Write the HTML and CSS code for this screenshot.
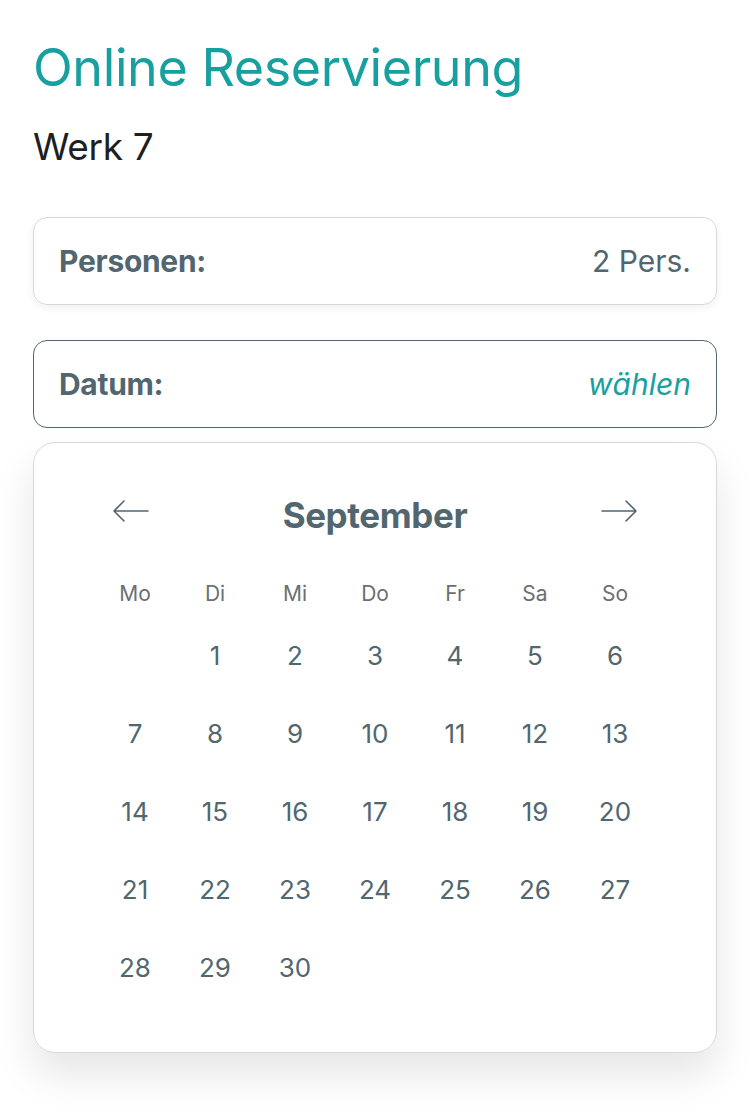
FILE: index.html
```html
<!DOCTYPE html>
<html lang="de">
  <head>
    <meta charset="UTF-8" />
    <meta name="viewport" content="width=device-width, initial-scale=1.0" />
    <title>Online Reservierung</title>
    <link rel="stylesheet" href="styles.css">
  </head>
  <body>
    <main id="container">
      <h1>Online Reservierung</h1>
      <h2>Werk 7</h2>

      <div class="field">
        <span class="label">Personen:</span>
        <span class="value">2 Pers.</span>
      </div>

      <div class="field active">
        <span class="label">Datum:</span>
        <span class="value pick">wählen</span>
      </div>

      <section class="calendar">
        <div class="cal-head">
          <button class="arrow" aria-label="zurück">
            <svg width="38" height="24" viewBox="0 0 38 24" fill="none" stroke="#52666f" stroke-width="1.6" stroke-linecap="round" stroke-linejoin="round">
              <path d="M36 12H2M12 2L2 12l10 10" />
            </svg>
          </button>
          <span class="month">September</span>
          <button class="arrow" aria-label="weiter">
            <svg width="38" height="24" viewBox="0 0 38 24" fill="none" stroke="#52666f" stroke-width="1.6" stroke-linecap="round" stroke-linejoin="round">
              <path d="M2 12h34M26 2l10 10-10 10" />
            </svg>
          </button>
        </div>
        <div class="weekdays">
          <span>Mo</span><span>Di</span><span>Mi</span><span>Do</span><span>Fr</span><span>Sa</span><span>So</span>
        </div>
        <div class="days" id="days"></div>
      </section>
    </main>
    <script>
        let days = document.getElementById('days');
        let offset = 1;
        for (let i = 0; i < offset; i++) {
            days.appendChild(document.createElement('span'));
        }
        for (let d = 1; d <= 30; d++) {
            let el = document.createElement('span');
            el.textContent = d;
            days.appendChild(el);
        }
    </script>
  </body>
</html>
```

FILE: styles.css
```css
html {
    font-family: Inter, "Noto Sans", sans-serif;
    color: #52666f;
}

body {
    margin: 0;
    background: #fff;
}

main {
    padding: 32px 33px 70px 33px;
}

h1 {
    font-size: 52px;
    font-weight: 400;
    color: #17a09f;
    margin: 0;
    line-height: 72px;
    letter-spacing: -0.4px;
}

h2 {
    font-size: 37px;
    font-weight: 400;
    color: #1d1f21;
    margin: 19px 0 0 0;
    line-height: 48px;
    letter-spacing: -0.3px;
}

.field {
    display: flex;
    justify-content: space-between;
    align-items: center;
    height: 88px;
    box-sizing: border-box;
    padding: 0 25px;
    margin-top: 46px;
    border: 1.5px solid #d6d9db;
    border-radius: 14px;
    box-shadow: 0 3px 8px rgba(0, 0, 0, 0.06);
    font-size: 30px;
}

.field + .field {
    margin-top: 35px;
}

.field.active {
    border-color: #52666f;
    box-shadow: none;
}

.label {
    font-weight: 700;
    letter-spacing: -0.3px;
}

.pick {
    color: #17a09f;
    font-style: italic;
}

.calendar {
    margin-top: 14px;
    height: 611px;
    box-sizing: border-box;
    border: 1.5px solid #d6d9db;
    border-radius: 22px;
    box-shadow: 0 22px 40px rgba(0, 0, 0, 0.1);
    padding: 43px 0 0 0;
}

.cal-head {
    display: flex;
    justify-content: space-between;
    align-items: center;
    width: 568px;
    margin: 0 auto;
}

.arrow {
    background: none;
    border: 0;
    padding: 0;
    width: 80px;
    height: 50px;
    display: flex;
    align-items: center;
    justify-content: center;
    cursor: pointer;
}

.month {
    font-size: 35px;
    font-weight: 700;
    letter-spacing: -0.4px;
    padding-top: 8px;
}

.weekdays,
.days {
    display: grid;
    grid-template-columns: repeat(7, 80px);
    width: 560px;
    margin: 0 auto;
    text-align: center;
}

.weekdays {
    margin-top: 45px;
    font-size: 21px;
    color: #6b6f72;
}

.days {
    margin-top: 10px;
    grid-auto-rows: 78px;
    font-size: 26px;
    align-items: center;
}
```
